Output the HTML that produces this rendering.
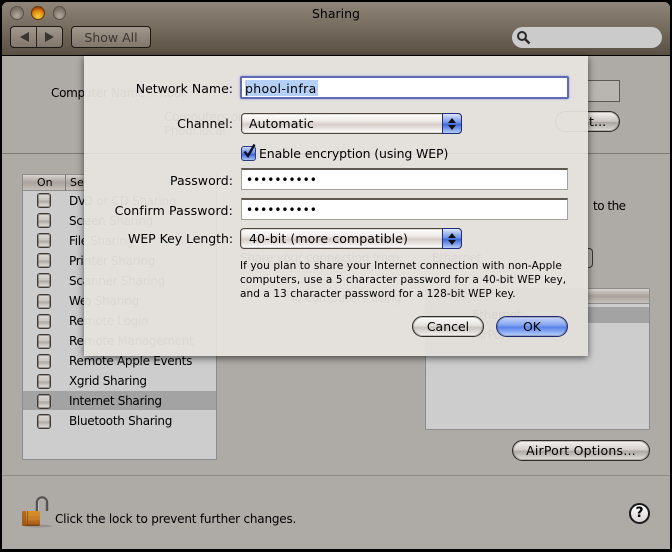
<!DOCTYPE html>
<html><head><meta charset="utf-8">
<style>
html,body{margin:0;padding:0;background:#000;}
#w{position:relative;width:672px;height:552px;overflow:hidden;background:#000;font-family:"DejaVu Sans","Liberation Sans",sans-serif;font-size:12px;color:#000;filter:blur(.3px);}
#w div{position:absolute;white-space:nowrap;box-sizing:border-box;}
.t{line-height:16px;height:16px;letter-spacing:-.3px;}
.s{line-height:16px;height:16px;font-size:12.5px;letter-spacing:.1px;}
.r{text-align:right;}
.cb{width:14px;height:15px;border:1px solid #3f3a35;border-radius:3px;box-shadow:inset 0 0 0 1px rgba(70,65,60,.45);background:linear-gradient(#dedad6,#c9c5c1 48%,#aaa6a2 52%,#e8e5e2);}
.btn{border:1px solid #2e2a26;border-radius:11px;box-shadow:inset 0 0 0 1px rgba(70,65,60,.3);background:linear-gradient(#fdfdfd,#e4e0dc 45%,#c9c4bf 55%,#f4f2f0);text-align:center;line-height:20px;font-size:12.5px;}
.pop{height:21px;border:1px solid #4f4840;box-shadow:inset 0 0 0 1px rgba(90,80,70,.2);border-radius:4px;background:linear-gradient(#fff,#f0ecea 35%,#d6cdc8 55%,#fff);line-height:20px;padding-left:7px;font-size:12.5px;}
.st{right:-1px;top:-1px;width:20px;height:21px;border:1px solid #1f2f80;border-radius:0 4px 4px 0;background:linear-gradient(#dfe6fa,#6f94e8 45%,#3c66d8 55%,#b6cdf8);}
.field{background:#fff;border:1px solid #a6a09a;border-top:2px solid #5e5850;}
.g{color:#000;opacity:.04;letter-spacing:-.3px;line-height:16px;height:16px;}
.dots{font-size:12px;letter-spacing:0;line-height:21px;padding-left:4px;}
</style></head><body>
<div id="w">
 <!-- window -->
 <div style="left:2px;top:2px;width:668px;height:547px;background:#aeaaa6;border-radius:6px 6px 0 0;overflow:hidden;">
  <div style="left:0;top:0;width:668px;height:54px;background:linear-gradient(#8f8478,#5a4f43);border-bottom:1px solid #000;"></div>
 </div>
 <!-- traffic lights -->
 <div style="left:10px;top:6px;width:14px;height:14px;border-radius:50%;border:1px solid #5a5046;background:radial-gradient(circle at 50% 75%,#b4aaa0,#7b7065 70%);"></div>
 <div style="left:31px;top:6px;width:14px;height:14px;border-radius:50%;border:1px solid #5e3a10;background:radial-gradient(circle at 50% 80%,#f7d040,#e08a10 50%,#a03808 85%);"></div>
 <div style="left:53px;top:6px;width:13px;height:14px;border-radius:50%;border:1px solid #5a5046;background:radial-gradient(circle at 50% 75%,#b4aaa0,#7b7065 70%);"></div>
 <div style="left:0;top:6px;width:672px;text-align:center;font-size:12.5px;line-height:16px;">Sharing</div>
 <!-- nav -->
 <div style="left:10px;top:26px;width:53px;height:22px;border:1px solid #1f1a15;border-radius:4px;background:linear-gradient(#a0968c,#82776c);"></div>
 <div style="left:36px;top:27px;width:1px;height:20px;background:#2a251f;"></div>
 <svg style="position:absolute;left:10px;top:26px" width="53" height="22"><path d="M10 11 L19 6 V16 Z" fill="#3a342e"/><path d="M35 6 V16 L44 11 Z" fill="#3a342e"/></svg>
 <div style="left:71px;top:26px;width:80px;height:22px;border:1px solid #1f1a15;border-radius:4px;background:linear-gradient(#a0968c,#82776c);color:#3a342e;text-align:center;line-height:21px;font-size:12.5px;">Show All</div>
 <!-- search -->
 <div style="left:512px;top:27px;width:150px;height:21px;border-radius:11px;background:#cbcbcb;"></div>
 <svg style="position:absolute;left:516px;top:30px" width="16" height="16"><circle cx="6" cy="6" r="4" fill="none" stroke="#2a2a2a" stroke-width="2"/><path d="M9 9 L13.5 13.5" stroke="#2a2a2a" stroke-width="2.4"/></svg>

 <!-- back content -->
 <div class="t" style="left:51px;top:85px;">Computer Name:</div>
 <div style="left:580px;top:80px;width:40px;height:22px;background:#b9b5b1;border:1px solid #5e5850;"></div>
 <div class="btn" style="left:555px;top:111px;width:65px;height:21px;background:linear-gradient(#f4f2f0,#c9c4bf 50%,#a9a49f 55%,#dedbd7);"></div>
 <div class="s" style="left:589px;top:114px;">t...</div>
 <div style="left:2px;top:153px;width:668px;height:1px;background:#7e7a76;"></div>
 <div style="left:2px;top:475px;width:668px;height:1px;background:#8e8a86;"></div>

 <!-- list -->
 <div style="left:22px;top:174px;width:195px;height:286px;background:#cdcdcd;border:1px solid #8c8c8c;"></div>
 <div style="left:23px;top:175px;width:193px;height:16px;background:linear-gradient(#d8d4d0,#a9a29c 50%,#c6c1bc);border-bottom:1px solid #8c8c8c;"></div>
 <div style="left:65px;top:175px;width:1px;height:16px;background:#7e7a76;"></div>
 <div style="left:37px;top:175px;font-size:11px;line-height:16px;">On</div>
 <div style="left:70px;top:175px;font-size:11px;line-height:16px;">Service</div>
 <div style="left:23px;top:391px;width:193px;height:19px;background:#a3a3a3;"></div>

 <div class="cb" style="left:37px;top:193px"></div><div class="t" style="left:69px;top:193px">DVD or CD Sharing</div>
 <div class="cb" style="left:37px;top:213px"></div><div class="t" style="left:69px;top:213px">Screen Sharing</div>
 <div class="cb" style="left:37px;top:233px"></div><div class="t" style="left:69px;top:233px">File Sharing</div>
 <div class="cb" style="left:37px;top:253px"></div><div class="t" style="left:69px;top:253px">Printer Sharing</div>
 <div class="cb" style="left:37px;top:273px"></div><div class="t" style="left:69px;top:273px">Scanner Sharing</div>
 <div class="cb" style="left:37px;top:294px"></div><div class="t" style="left:69px;top:293px">Web Sharing</div>
 <div class="cb" style="left:37px;top:314px"></div><div class="t" style="left:69px;top:313px">Remote Login</div>
 <div class="cb" style="left:37px;top:334px"></div><div class="t" style="left:69px;top:333px">Remote Management</div>
 <div class="cb" style="left:37px;top:354px"></div><div class="t" style="left:69px;top:353px">Remote Apple Events</div>
 <div class="cb" style="left:37px;top:374px"></div><div class="t" style="left:69px;top:373px">Xgrid Sharing</div>
 <div class="cb" style="left:37px;top:394px"></div><div class="t" style="left:69px;top:393px">Internet Sharing</div>
 <div class="cb" style="left:37px;top:414px"></div><div class="t" style="left:69px;top:413px">Bluetooth Sharing</div>

 <!-- right side -->
 <div class="t" style="left:593px;top:198px;letter-spacing:-.5px">to the</div>
 <div style="left:425px;top:288px;width:225px;height:142px;background:#cdcdcd;border:1px solid #8c8c8c;"></div>
 <div style="left:426px;top:289px;width:223px;height:15px;background:linear-gradient(#d8d4d0,#a9a29c 50%,#c6c1bc);border-bottom:1px solid #8c8c8c;"></div>
 <div style="left:426px;top:307px;width:223px;height:16px;background:#a3a3a3;"></div>
 <div class="btn" style="left:512px;top:440px;width:138px;height:21px;background:linear-gradient(#f4f2f0,#d5d0cb 45%,#aeaaa5 55%,#e2dfdb);letter-spacing:.2px;">AirPort Options…</div>
 <div style="left:585px;top:248px;width:8px;height:20px;border:1px solid #3a342e;border-left:0;border-radius:0 4px 4px 0;"></div>

 <!-- sheet -->
 <div style="left:84px;top:56px;width:504px;height:300px;background:#e4e1dd;box-shadow:0 2px 7px rgba(0,0,0,.6);">
  <div style="left:0;top:97px;width:504px;height:1px;background:rgba(0,0,0,.03)"></div>
  <div style="left:132px;top:118px;width:1px;height:182px;background:rgba(0,0,0,.025)"></div>
  <div style="left:341px;top:232px;width:163px;height:68px;background:rgba(0,0,0,.012)"></div>
  <div style="left:471px;top:55px;width:33px;height:21px;border:1px solid rgba(0,0,0,.05);border-right:0;border-radius:11px 0 0 11px"></div>
  <div class="g" style="left:0;top:29px">uter Name: Phool</div>
  <div class="g" style="left:80px;top:53px">Computers on your local subnet can access</div>
  <div class="g" style="left:80px;top:67px">Phool.local</div>
  <div class="g" style="left:0;top:137px">D or CD Sharing</div>
  <div class="g" style="left:0;top:157px">een Sharing</div>
  <div class="g" style="left:6px;top:177px">Sharing</div>
  <div class="g" style="left:0;top:197px">nter Sharing</div>
  <div class="g" style="left:0;top:217px">anner Sharing</div>
  <div class="g" style="left:0;top:237px">b Sharing</div>
  <div class="g" style="left:0;top:257px">mote Login</div>
  <div class="g" style="left:0;top:277px">mote Management</div>
  <div class="g" style="left:156px;top:194px">Share your connection from:</div>
  <div class="g" style="left:348px;top:194px">Ethernet</div>
  <div class="g" style="left:206px;top:234px">To computers using:</div>
  <div class="g" style="left:388px;top:251px">Ethernet</div>
  <div class="g" style="left:388px;top:271px">AirPort</div>
 </div>

 <!-- sheet form -->
 <div class="s r" style="left:84px;top:81px;width:149px;letter-spacing:0;">Network Name:</div>
 <div style="left:240px;top:76px;width:329px;height:23px;border:2px solid #5f6cb5;border-radius:2px;background:#fff;box-shadow:0 0 2px #8a94d0;"></div>
 <div style="left:245px;top:80px;width:73px;height:16px;background:#b5d0f6;"></div>
 <div class="s" style="left:245px;top:81px;letter-spacing:.35px;">phool-infra</div>

 <div class="s r" style="left:84px;top:116px;width:149px;letter-spacing:.05px;">Channel:</div>
 <div class="pop" style="left:241px;top:113px;width:221px;letter-spacing:.1px;">Automatic<div class="st"></div></div>
 <svg style="position:absolute;left:442px;top:113px" width="20" height="21"><path d="M10 5 L14 10 H6 Z M6 12 H14 L10 17 Z" fill="#111"/></svg>

 <div style="left:241px;top:146px;width:15px;height:15px;border:1px solid #2c3a80;border-radius:3px;background:linear-gradient(#cfdaf7,#5f86e2 50%,#3d64d2 55%,#a8c2f6);"></div>
 <svg style="position:absolute;left:241px;top:142px" width="18" height="18"><path d="M3.5 9.5 L7 14 L13.5 2.5" fill="none" stroke="#0a0f30" stroke-width="2.4"/></svg>
 <div class="s" style="left:259px;top:146px;letter-spacing:-.12px;">Enable encryption (using WEP)</div>

 <div class="s r" style="left:84px;top:173px;width:149px;letter-spacing:.05px;">Password:</div>
 <div class="field dots" style="left:241px;top:168px;width:327px;height:22px;">••••••••••</div>
 <div class="s r" style="left:84px;top:203px;width:149px;letter-spacing:.15px;">Confirm Password:</div>
 <div class="field dots" style="left:241px;top:198px;width:327px;height:22px;">••••••••••</div>

 <div class="s r" style="left:84px;top:231px;width:149px;letter-spacing:-.05px;">WEP Key Length:</div>
 <div class="pop" style="left:240px;top:228px;width:222px;padding-left:8px;letter-spacing:.1px;">40-bit (more compatible)<div class="st"></div></div>
 <svg style="position:absolute;left:442px;top:228px" width="20" height="21"><path d="M10 5 L14 10 H6 Z M6 12 H14 L10 17 Z" fill="#111"/></svg>

 <div style="left:240px;top:259px;font-size:10.5px;line-height:14px;letter-spacing:.08px;">If you plan to share your Internet connection with non-Apple<br>computers, use a 5 character password for a 40-bit WEP key,<br>and a 13 character password for a 128-bit WEP key.</div>

 <div class="btn" style="left:412px;top:316px;width:72px;height:21px;">Cancel</div>
 <div class="btn" style="left:496px;top:316px;width:72px;height:21px;border-color:#1d2a70;background:linear-gradient(#c9d8fa,#8aa8f0 40%,#5a84ea 55%,#b9d2fb);">OK</div>

 <!-- lock -->
 <svg style="position:absolute;left:18px;top:494px" width="34" height="36">
  <defs>
   <linearGradient id="lk" x1="0" y1="0" x2="0" y2="1"><stop offset="0" stop-color="#d9922e"/><stop offset=".5" stop-color="#c47a20"/><stop offset=".85" stop-color="#a8601a"/><stop offset="1" stop-color="#6e3e10"/></linearGradient>
  </defs>
  <ellipse cx="20" cy="32" rx="14" ry="1.4" fill="#94908c"/>
  <path d="M19 18 V8.5 a5 5 0 0 1 10 0 V17" fill="none" stroke="#55524f" stroke-width="2.4"/>
  <path d="M20.4 17 V8.5 a3.6 3.6 0 0 1 7.2 0" fill="none" stroke="#c4c1be" stroke-width=".8"/>
  <rect x="4" y="17" width="18" height="15" rx="1.5" fill="url(#lk)"/>
  <rect x="4" y="17" width="4" height="15" rx="1.5" fill="#9c5a18" opacity=".7"/>
  <rect x="9" y="17" width="1" height="15" fill="#7e4a14" opacity=".7"/>
  <path d="M10 21 H22 M10 25 H22" stroke="#e0a658" stroke-width=".6" opacity=".7"/>
 </svg>
 <div class="t" style="left:55px;top:511px;letter-spacing:-.2px;">Click the lock to prevent further changes.</div>

 <!-- help -->
 <div style="left:629px;top:503px;width:21px;height:21px;border-radius:50%;border:2px solid #1a1a1a;background:linear-gradient(#fff,#d8d5d1);text-align:center;font-weight:bold;font-size:14px;line-height:17px;">?</div>
</div>
</body></html>
